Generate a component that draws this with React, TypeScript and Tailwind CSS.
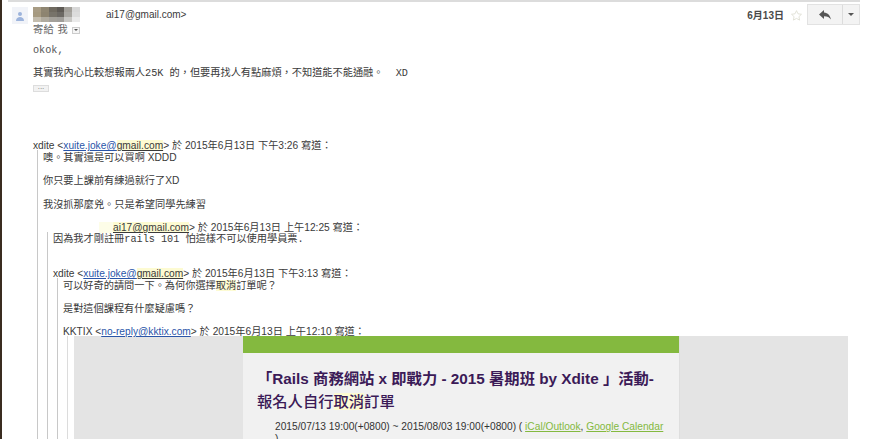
import React from "react";

const CJK = '"Liberation Sans","Noto Sans CJK TC",sans-serif';
const COLON = "\uFF1A";
const COMMA = "\uFF0C";
const Q = "\uFF1F";

const pixels = [
  "#a89c84", "#8f8672", "#6f6a60", "#5e5a55", "#a3a09a", "#d8d8d8",
  "#a69a80", "#8d8470", "#77736a", "#6c6964", "#aaa8a3", "#dcdcdc",
  "#c4bdae", "#b0ab9f", "#a4a19b", "#a09e9a", "#c8c7c4", "#eaeaea",
];

function Hl({ children }: { children: React.ReactNode }) {
  return <span className="bg-[#fdfbd2]">{children}</span>;
}

function A({ children }: { children: React.ReactNode }) {
  return <span className="text-[#2a55a8] underline">{children}</span>;
}

function Line({ children, className = "" }: { children: React.ReactNode; className?: string }) {
  return <div className={`h-[12px] whitespace-nowrap leading-[15px] ${className}`}>{children}</div>;
}

function Quote({ children, className = "" }: { children: React.ReactNode; className?: string }) {
  return <div className={`border-l border-[#c8c8c8] pl-[5px] ${className}`}>{children}</div>;
}

export default function App() {
  return (
    <div
      lang="zh-TW"
      className="relative h-[439px] w-[881px] overflow-hidden bg-white text-[10.2px] leading-[12px] text-[#3a3a3a]"
      style={{ fontFamily: CJK }}
    >
      <div className="flex h-full border-l-2 border-[#3a2c20]">
        <div className="flex w-full flex-col">
          <div className="ml-[6px] mr-[21px] h-[2px] bg-[#dcdcdc]" />
          {/* header */}
          <div className="flex h-[34px] pl-[10px] pr-[21px]">
            <div className="mt-[5px] flex h-[17px] w-[16px] items-center justify-center bg-[#f1f3f8]">
              <svg width="10" height="10" viewBox="0 0 10 10" fill="#9db4dc">
                <circle cx="5" cy="3" r="2" />
                <path d="M1 10c0-3 2-4 4-4s4 1 4 4z" />
              </svg>
            </div>
            <div className="ml-[5px] flex min-w-0 flex-1 flex-col">
              <div className="mt-[5px] flex h-[15px] items-start">
                <div className="grid h-[15px] w-[47px] shrink-0 grid-cols-6">
                  {pixels.map((c, i) => (
                    <div key={i} style={{ backgroundColor: c }} />
                  ))}
                </div>
                <span className="ml-[26px] text-[10px] leading-[15px]">ai17@gmail.com&gt;</span>
              </div>
              <div className="mt-[2px] flex h-[12px] items-center text-[#666]">
                <span className="tracking-[0.4px]">寄給 我</span>
                <span className="ml-[4px] flex h-[7px] w-[8px] items-center justify-center border border-[#ccc] bg-[#f5f5f5]">
                  <span className="h-0 w-0 border-x-[2px] border-t-[2px] border-x-transparent border-t-[#555]" />
                </span>
              </div>
            </div>
            <div className="flex h-[25px] items-start">
              <span className="mt-[8px] text-[10px] font-bold leading-[12px] text-[#4a4a4a]">6月13日</span>
              <svg className="ml-[6px] mt-[7px]" width="13" height="13" viewBox="0 0 24 24" fill="none" stroke="#dcdcd0" strokeWidth="1.5">
                <path d="M12 3l2.8 5.9 6.4.8-4.7 4.4 1.2 6.4L12 17.4l-5.7 3.1 1.2-6.4-4.7-4.4 6.4-.8z" />
              </svg>
              <div className="ml-[4px] mt-[2px] flex h-[21px] w-[53px] border border-[#e2e2e2] bg-[#f3f3f3]">
                <div className="flex w-[35px] items-center justify-center border-r border-[#dcdcdc]">
                  <svg width="12" height="10" viewBox="0 0 12 10" fill="#555">
                    <path d="M5 0v2.6c4 .3 6 3 7 7-1.4-2.2-3.6-3.4-7-3.4V9L0 4.5z" />
                  </svg>
                </div>
                <div className="flex flex-1 items-center justify-center">
                  <span className="h-0 w-0 border-x-[3px] border-t-[3px] border-x-transparent border-t-[#555]" />
                </div>
              </div>
            </div>
          </div>

          {/* body */}
          <div className="flex min-h-0 flex-1 flex-col pl-[31px]">
            <div className="mt-[7px] font-['Liberation_Mono','Noto_Sans_CJK_TC',monospace] text-[10.2px]">
              <Line className="leading-[16px] text-[#555]">okok,</Line>
              <Line className="mt-[11px] leading-[16px]">
                其實我內心比較想報兩人25K 的{COMMA}但要再找人有點麻煩{COMMA}不知道能不能通融。&nbsp;&nbsp;XD
              </Line>
            </div>
            <div className="mt-[7px] flex h-[7px] w-[16px] items-center justify-center border border-[#ddd] bg-[#f2f2f2] pb-[4px] text-[8px] leading-[2px] text-[#777]">
              ...
            </div>

            <Line className="mt-[46px]">
              xdite &lt;<A>xuite.joke@</A><span className="bg-[#fdfbd2] underline">gmail.com</span>&gt; 於 2015年6月13日 下午3:26 寫道{COLON}
            </Line>
            <div className="ml-[4px]">
              <Quote>
                <Line>噢。其實還是可以買啊 XDDD</Line>
                <Line className="mt-[11px]">你只要上課前有練過就行了XD</Line>
                <Line className="mt-[12px]">我沒抓那麼兇。只是希望同學先練習</Line>
                <Line className="mt-[11px] pl-[56px]">
                  <span className="bg-[#fdfde8] pl-[14px]"><span className="bg-[#fdfbd2] underline">ai17@gmail.com</span></span>&gt; 於 2015年6月13日 上午12:25 寫道{COLON}
                </Line>
                <div className="ml-[4px]">
                  <Quote>
                    <Line className="font-['Liberation_Mono','Noto_Sans_CJK_TC',monospace]">因為我才剛註冊rails 101 怕這樣不可以使用學員票.</Line>
                    <Line className="mt-[22px]">
                      xdite &lt;<A>xuite.joke@</A><span className="bg-[#fdfbd2] underline">gmail.com</span>&gt; 於 2015年6月13日 下午3:13 寫道{COLON}
                    </Line>
                    <div className="ml-[4px]">
                      <Quote>
                        <Line>可以好奇的請問一下。為何你選擇<Hl>取消</Hl>訂單呢{Q}</Line>
                        <Line className="mt-[11px]">是對這個課程有什麼疑慮嗎{Q}</Line>
                        <Line className="mt-[11px]">KKTIX &lt;<A>no-reply@kktix.com</A>&gt; 於 2015年6月13日 上午12:10 寫道{COLON}</Line>
                        <div className="ml-[4px] border-l border-[#dcdcdc] pl-[6px]">
                          <div className="mr-[33px] h-[110px] overflow-hidden bg-[#e4e4e4] pl-[169px]">
                            <div className="h-[110px] w-[437px] border-r border-[#dedede] bg-[#f1f1f1]">
                              <div className="h-[17px] bg-[#84b93f]" />
                              <div className="pl-[14px] pt-[14px] text-[15.3px] text-[#3b1a57]">
                                <div className="h-[23px] whitespace-nowrap font-bold leading-[23px]">「Rails 商務網站 x 即戰力 - 2015 暑期班 by Xdite 」活動-</div>
                                <div className="h-[23px] whitespace-nowrap font-medium leading-[23px]">報名人自行<Hl>取消</Hl>訂單</div>
                              </div>
                              <div className="ml-[32px] mr-[15px] mt-[8px] text-[10.2px] leading-[12px] text-[#333]">
                                2015/07/13 19:00(+0800) ~ 2015/08/03 19:00(+0800) ( <span className="text-[#84b93f] underline">iCal/Outlook</span>, <span className="text-[#84b93f] underline">Google Calendar</span> )
                              </div>
                            </div>
                          </div>
                        </div>
                      </Quote>
                    </div>
                  </Quote>
                </div>
              </Quote>
            </div>
          </div>
        </div>
      </div>
    </div>
  );
}
